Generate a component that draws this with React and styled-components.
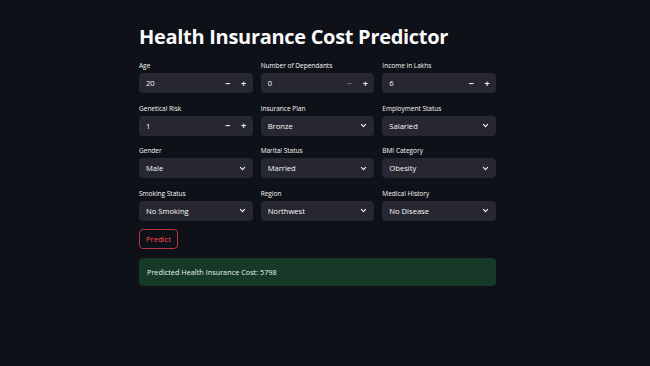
import styled, { createGlobalStyle } from "styled-components";

const GlobalStyle = createGlobalStyle`
  html, body {
    margin: 0;
    padding: 0;
    background: #0e1117;
  }
  body {
    font-family: "Open Sans", "Noto Sans", sans-serif;
    color: #fafafa;
  }
`;

const Page = styled.div`
  min-height: 100vh;
  display: flex;
  justify-content: center;
  padding-right: 15px;
`;

const Main = styled.main`
  width: 357px;
  padding-top: 22px;
`;

const Title = styled.h1`
  margin: 0 0 10px;
  font-size: 20px;
  line-height: 29px;
  font-weight: 700;
  letter-spacing: -0.3px;
  color: #fafafa;
`;

const Grid = styled.div`
  display: grid;
  grid-template-columns: repeat(3, 1fr);
  column-gap: 8px;
  row-gap: 10.5px;
`;

const Field = styled.div`
  display: flex;
  flex-direction: column;
  gap: 3px;
`;

const Label = styled.label`
  font-size: 6.5px;
  line-height: 9px;
  color: #fafafa;
`;

const Box = styled.div`
  height: 20px;
  background: #262730;
  border-radius: 4px;
  display: flex;
  align-items: center;
  padding: 0 ${(p) => (p.$stepper ? "1px" : "6px")} 0 7px;
  box-sizing: border-box;
`;

const Value = styled.span`
  flex: 1;
  font-size: 7.6px;
  font-weight: 500;
  color: #fafafa;
`;

const Step = styled.span`
  width: 16px;
  text-align: center;
  font-size: 9px;
  font-weight: 700;
  line-height: 1;
  color: ${(p) => (p.$disabled ? "#6b6d76" : "#fafafa")};
`;

const Chevron = styled.svg`
  width: 7px;
  height: 7px;
  margin-right: 1px;
`;

const PredictButton = styled.button`
  margin-top: 8px;
  height: 20px;
  padding: 0 6px;
  background: transparent;
  border: 1px solid #b3383f;
  border-radius: 4px;
  color: #ff4b4b;
  font-family: inherit;
  font-size: 7.6px;
`;

const Alert = styled.div`
  margin-top: 9px;
  height: 28px;
  display: flex;
  align-items: center;
  padding: 0 8px;
  border-radius: 4px;
  background: #173928;
  color: #e4f5e9;
  font-size: 7.3px;
`;

const NumberInput = ({ label, value, minDisabled }) => (
  <Field>
    <Label>{label}</Label>
    <Box $stepper>
      <Value>{value}</Value>
      <Step $disabled={minDisabled}>−</Step>
      <Step>+</Step>
    </Box>
  </Field>
);

const Select = ({ label, value }) => (
  <Field>
    <Label>{label}</Label>
    <Box>
      <Value>{value}</Value>
      <Chevron viewBox="0 0 10 10">
        <path d="M2 3.5 L5 6.5 L8 3.5" fill="none" stroke="#fafafa" strokeWidth="1.6" strokeLinecap="round" strokeLinejoin="round" />
      </Chevron>
    </Box>
  </Field>
);

export default function App() {
  return (
    <Page>
      <GlobalStyle />
      <Main>
        <Title>Health Insurance Cost Predictor</Title>
        <Grid>
          <NumberInput label="Age" value="20" />
          <NumberInput label="Number of Dependants" value="0" minDisabled />
          <NumberInput label="Income in Lakhs" value="6" />
          <NumberInput label="Genetical Risk" value="1" />
          <Select label="Insurance Plan" value="Bronze" />
          <Select label="Employment Status" value="Salaried" />
          <Select label="Gender" value="Male" />
          <Select label="Marital Status" value="Married" />
          <Select label="BMI Category" value="Obesity" />
          <Select label="Smoking Status" value="No Smoking" />
          <Select label="Region" value="Northwest" />
          <Select label="Medical History" value="No Disease" />
        </Grid>
        <PredictButton>Predict</PredictButton>
        <Alert>Predicted Health Insurance Cost: 5798</Alert>
      </Main>
    </Page>
  );
}
